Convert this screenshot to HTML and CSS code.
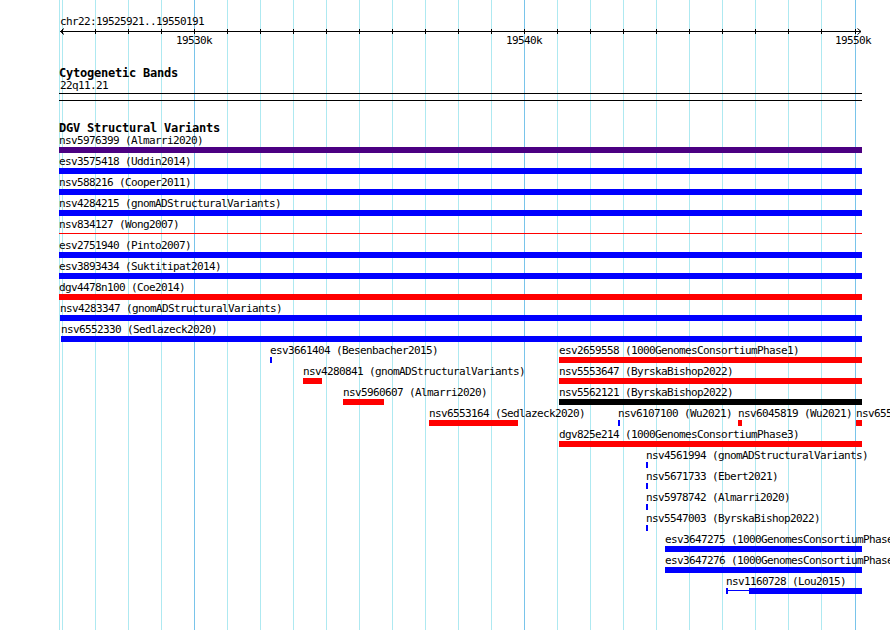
FILE: index.html
```html
<!DOCTYPE html>
<html lang="en">
<head>
<meta charset="utf-8">
<title>DGV Structural Variants — chr22:19525921..19550191</title>
<link rel="stylesheet" href="styles.css">
</head>
<body>
<div class="browser">
  <svg class="grid" width="890" height="630" viewBox="0 0 890 630" shape-rendering="crispEdges">
    <g class="minor">
      <line x1="59.5" y1="0" x2="59.5" y2="630"/>
      <line x1="62.5" y1="0" x2="62.5" y2="630"/>
      <line x1="95.5" y1="0" x2="95.5" y2="630"/>
      <line x1="128.5" y1="0" x2="128.5" y2="630"/>
      <line x1="161.5" y1="0" x2="161.5" y2="630"/>
      <line x1="227.5" y1="0" x2="227.5" y2="630"/>
      <line x1="260.5" y1="0" x2="260.5" y2="630"/>
      <line x1="293.5" y1="0" x2="293.5" y2="630"/>
      <line x1="326.5" y1="0" x2="326.5" y2="630"/>
      <line x1="359.5" y1="0" x2="359.5" y2="630"/>
      <line x1="392.5" y1="0" x2="392.5" y2="630"/>
      <line x1="425.5" y1="0" x2="425.5" y2="630"/>
      <line x1="458.5" y1="0" x2="458.5" y2="630"/>
      <line x1="491.5" y1="0" x2="491.5" y2="630"/>
      <line x1="557.5" y1="0" x2="557.5" y2="630"/>
      <line x1="590.5" y1="0" x2="590.5" y2="630"/>
      <line x1="623.5" y1="0" x2="623.5" y2="630"/>
      <line x1="656.5" y1="0" x2="656.5" y2="630"/>
      <line x1="689.5" y1="0" x2="689.5" y2="630"/>
      <line x1="722.5" y1="0" x2="722.5" y2="630"/>
      <line x1="755.5" y1="0" x2="755.5" y2="630"/>
      <line x1="788.5" y1="0" x2="788.5" y2="630"/>
      <line x1="821.5" y1="0" x2="821.5" y2="630"/>
    </g>
    <g class="major">
      <line x1="194.5" y1="0" x2="194.5" y2="630"/>
      <line x1="524.5" y1="0" x2="524.5" y2="630"/>
      <line x1="855.5" y1="0" x2="855.5" y2="630"/>
    </g>
  </svg>

  <div class="ruler">
    <div class="locus">chr22:19525921..19550191</div>
    <svg class="scale" width="890" height="7" viewBox="0 0 890 7">
      <g shape-rendering="crispEdges" class="scale-line">
        <line x1="60" y1="3.5" x2="861" y2="3.5"/>
        <line x1="62.5" y1="1" x2="62.5" y2="6"/>
        <line x1="95.5" y1="1" x2="95.5" y2="6"/>
        <line x1="128.5" y1="1" x2="128.5" y2="6"/>
        <line x1="161.5" y1="1" x2="161.5" y2="6"/>
        <line x1="194.5" y1="1" x2="194.5" y2="6"/>
        <line x1="227.5" y1="1" x2="227.5" y2="6"/>
        <line x1="260.5" y1="1" x2="260.5" y2="6"/>
        <line x1="293.5" y1="1" x2="293.5" y2="6"/>
        <line x1="326.5" y1="1" x2="326.5" y2="6"/>
        <line x1="359.5" y1="1" x2="359.5" y2="6"/>
        <line x1="392.5" y1="1" x2="392.5" y2="6"/>
        <line x1="425.5" y1="1" x2="425.5" y2="6"/>
        <line x1="458.5" y1="1" x2="458.5" y2="6"/>
        <line x1="491.5" y1="1" x2="491.5" y2="6"/>
        <line x1="524.5" y1="1" x2="524.5" y2="6"/>
        <line x1="557.5" y1="1" x2="557.5" y2="6"/>
        <line x1="590.5" y1="1" x2="590.5" y2="6"/>
        <line x1="623.5" y1="1" x2="623.5" y2="6"/>
        <line x1="656.5" y1="1" x2="656.5" y2="6"/>
        <line x1="689.5" y1="1" x2="689.5" y2="6"/>
        <line x1="722.5" y1="1" x2="722.5" y2="6"/>
        <line x1="755.5" y1="1" x2="755.5" y2="6"/>
        <line x1="788.5" y1="1" x2="788.5" y2="6"/>
        <line x1="821.5" y1="1" x2="821.5" y2="6"/>
        <line x1="855.5" y1="1" x2="855.5" y2="6"/>
      </g>
      <polyline class="arrow" points="64,0.5 60.5,3.5 64,6.5"/>
      <polyline class="arrow" points="857.5,0.5 861,3.5 857.5,6.5"/>
    </svg>
    <div class="scale-labels">
      <span class="scale-label" style="left:176px">19530k</span>
      <span class="scale-label" style="left:506px">19540k</span>
      <span class="scale-label" style="left:835px">19550k</span>
    </div>
  </div>

  <section class="track cyto">
    <h2 class="track-title">Cytogenetic Bands</h2>
    <div class="band-name">22q11.21</div>
    <div class="band"></div>
  </section>

  <section class="track dgv">
    <h2 class="track-title">DGV Structural Variants</h2>

    <div class="row">
      <div class="feat" style="left:59px;width:803px"><span class="lbl">nsv5976399 (Almarri2020)</span><i class="bar indigo"></i></div>
    </div>
    <div class="row">
      <div class="feat" style="left:59px;width:803px"><span class="lbl">esv3575418 (Uddin2014)</span><i class="bar blue"></i></div>
    </div>
    <div class="row">
      <div class="feat" style="left:59px;width:803px"><span class="lbl">nsv588216 (Cooper2011)</span><i class="bar blue"></i></div>
    </div>
    <div class="row">
      <div class="feat" style="left:59px;width:803px"><span class="lbl">nsv4284215 (gnomADStructuralVariants)</span><i class="bar blue"></i></div>
    </div>
    <div class="row">
      <div class="feat" style="left:59px;width:803px"><span class="lbl">nsv834127 (Wong2007)</span><i class="bar thin red"></i></div>
    </div>
    <div class="row">
      <div class="feat" style="left:59px;width:803px"><span class="lbl">esv2751940 (Pinto2007)</span><i class="bar blue"></i></div>
    </div>
    <div class="row">
      <div class="feat" style="left:59px;width:803px"><span class="lbl">esv3893434 (Suktitipat2014)</span><i class="bar blue"></i></div>
    </div>
    <div class="row">
      <div class="feat" style="left:59px;width:803px"><span class="lbl">dgv4478n100 (Coe2014)</span><i class="bar red"></i></div>
    </div>
    <div class="row">
      <div class="feat" style="left:60px;width:802px"><span class="lbl">nsv4283347 (gnomADStructuralVariants)</span><i class="bar blue"></i></div>
    </div>
    <div class="row">
      <div class="feat" style="left:61px;width:801px"><span class="lbl">nsv6552330 (Sedlazeck2020)</span><i class="bar blue"></i></div>
    </div>
    <div class="row">
      <div class="feat" style="left:270px;width:2px"><span class="lbl">esv3661404 (Besenbacher2015)</span><i class="bar blue"></i></div>
      <div class="feat" style="left:559px;width:303px"><span class="lbl">esv2659558 (1000GenomesConsortiumPhase1)</span><i class="bar red"></i></div>
    </div>
    <div class="row">
      <div class="feat" style="left:303px;width:19px"><span class="lbl">nsv4280841 (gnomADStructuralVariants)</span><i class="bar red"></i></div>
      <div class="feat" style="left:559px;width:303px"><span class="lbl">nsv5553647 (ByrskaBishop2022)</span><i class="bar red"></i></div>
    </div>
    <div class="row">
      <div class="feat" style="left:343px;width:41px"><span class="lbl">nsv5960607 (Almarri2020)</span><i class="bar red"></i></div>
      <div class="feat" style="left:559px;width:303px"><span class="lbl">nsv5562121 (ByrskaBishop2022)</span><i class="bar black"></i></div>
    </div>
    <div class="row">
      <div class="feat" style="left:429px;width:89px"><span class="lbl">nsv6553164 (Sedlazeck2020)</span><i class="bar red"></i></div>
      <div class="feat" style="left:618px;width:2px"><span class="lbl">nsv6107100 (Wu2021)</span><i class="bar blue"></i></div>
      <div class="feat" style="left:738px;width:4px"><span class="lbl">nsv6045819 (Wu2021)</span><i class="bar red"></i></div>
      <div class="feat" style="left:856px;width:6px"><span class="lbl">nsv6553165 (Sedlazeck2020)</span><i class="bar red"></i></div>
    </div>
    <div class="row">
      <div class="feat" style="left:559px;width:303px"><span class="lbl">dgv825e214 (1000GenomesConsortiumPhase3)</span><i class="bar red"></i></div>
    </div>
    <div class="row">
      <div class="feat" style="left:646px;width:2px"><span class="lbl">nsv4561994 (gnomADStructuralVariants)</span><i class="bar blue"></i></div>
    </div>
    <div class="row">
      <div class="feat" style="left:646px;width:2px"><span class="lbl">nsv5671733 (Ebert2021)</span><i class="bar blue"></i></div>
    </div>
    <div class="row">
      <div class="feat" style="left:646px;width:2px"><span class="lbl">nsv5978742 (Almarri2020)</span><i class="bar blue"></i></div>
    </div>
    <div class="row">
      <div class="feat" style="left:646px;width:2px"><span class="lbl">nsv5547003 (ByrskaBishop2022)</span><i class="bar blue"></i></div>
    </div>
    <div class="row">
      <div class="feat" style="left:665px;width:197px"><span class="lbl">esv3647275 (1000GenomesConsortiumPhase3)</span><i class="bar blue"></i></div>
    </div>
    <div class="row">
      <div class="feat" style="left:665px;width:197px"><span class="lbl">esv3647276 (1000GenomesConsortiumPhase3)</span><i class="bar blue"></i></div>
    </div>
    <div class="row">
      <div class="feat" style="left:726px;width:136px"><span class="lbl">nsv1160728 (Lou2015)</span>
        <span class="segments">
          <i class="seg-block" style="width:2px"></i>
          <i class="seg-link" style="width:21px"></i>
          <i class="seg-block grow"></i>
        </span>
      </div>
    </div>
  </section>
</div>
</body>
</html>
```

FILE: styles.css
```css
html, body {
  margin: 0;
  padding: 0;
  background: #ffffff;
}

.browser {
  position: relative;
  z-index: 0;
  width: 890px;
  height: 630px;
  overflow: hidden;
  font-family: "DejaVu Sans Mono", "Liberation Mono", monospace;
  font-size: 11px;
  letter-spacing: -0.62px;
  line-height: 12px;
  color: #000000;
}

.grid {
  position: absolute;
  top: 0;
  left: 0;
  z-index: -1;
}

.grid .minor line {
  stroke: #aee9f1;
  stroke-width: 1;
}

.grid .major line {
  stroke: #79c4ea;
  stroke-width: 1;
}

/* ruler */
.locus {
  padding: 16px 0 0 60px;
  height: 12px;
  white-space: nowrap;
}

.scale {
  display: block;
}

.scale-line line {
  stroke: #000000;
  stroke-width: 1;
}

.arrow {
  fill: none;
  stroke: #000000;
  stroke-width: 1;
}

.scale-labels {
  position: relative;
  height: 12px;
}

.scale-label {
  position: absolute;
  top: 0;
  white-space: nowrap;
}

/* tracks */
.track-title {
  margin: 0;
  padding-left: 59px;
  font-size: 12px;
  letter-spacing: -0.22px;
  line-height: 14px;
  font-weight: bold;
  white-space: nowrap;
}

.cyto {
  padding-top: 19px;
}

.band-name {
  padding-left: 60px;
  height: 12px;
}

.band {
  margin: 1px 0 0 59px;
  width: 803px;
  height: 6px;
  border-top: 1px solid #000000;
  border-bottom: 1px solid #000000;
}

.dgv {
  padding-top: 20px;
}

.row {
  position: relative;
  height: 21px;
}

.feat {
  position: absolute;
  top: 0;
  height: 18px;
}

.lbl {
  display: block;
  height: 12px;
  white-space: nowrap;
}

.bar {
  display: block;
  width: 100%;
  height: 6px;
}

.bar.thin {
  height: 1px;
  margin-top: 2px;
}

.indigo { background: #4b0082; }
.blue { background: #0000ff; }
.red { background: #ff0000; }
.black { background: #000000; }

.segments {
  display: flex;
  align-items: flex-start;
  height: 6px;
}

.seg-block {
  display: block;
  height: 6px;
  background: #0000ff;
}

.seg-block.grow {
  flex: 1;
}

.seg-link {
  display: block;
  height: 1px;
  margin-top: 2px;
  background: #0000ff;
}
```
